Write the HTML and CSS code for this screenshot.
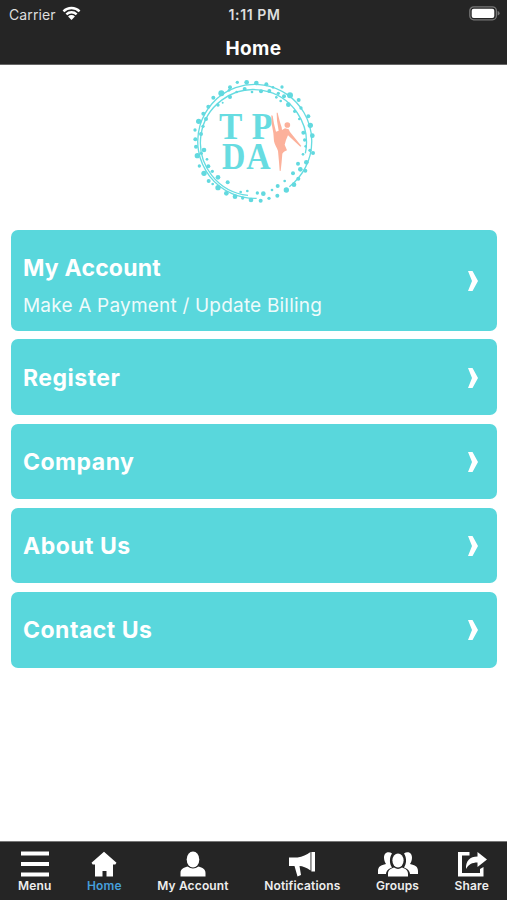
FILE: index.html
```html
<!DOCTYPE html>
<html lang="en">
<head>
    <meta charset="UTF-8">
    <meta name="viewport" content="width=device-width, initial-scale=1.0">
    <title>Home</title>
    <link rel="stylesheet" href="styles.css">
</head>
<body>
    <header class="header">
        <div class="status-bar">
            <div class="carrier">
                <span>Carrier</span>
                <svg class="wifi" viewBox="0 0 20 15">
                    <path d="M1.5 5.2a12 12 0 0 1 17 0M4.6 8.5a7.6 7.6 0 0 1 10.8 0" fill="none" stroke="#fff" stroke-width="2.5"/>
                    <path d="M6.4 10.7a5 5 0 0 1 7.2 0L10 14.4z" fill="#fff"/>
                </svg>
            </div>
            <span class="time">1:11 PM</span>
            <svg class="battery" viewBox="0 0 31 15">
                <rect x="0.8" y="0.8" width="26.6" height="13" rx="4" fill="none" stroke="#777" stroke-width="1.3"/>
                <rect x="2.7" y="2.7" width="22.6" height="9.2" rx="2" fill="#fff"/>
                <path d="M28.6 5q2 .6 2 2.3t-2 2.3z" fill="#777"/>
            </svg>
        </div>
        <h1 class="title">Home</h1>
    </header>

    <main class="content">
        <svg class="logo" viewBox="0 0 420 420">
            <!-- two thin rings, both open at the lower right -->
            <g fill="none" stroke="#67dce1">
                <path d="M218 379A171 171 0 1 1 316 344" stroke-width="4"/>
                <path d="M192 370A159 159 0 1 1 364 244" stroke-width="4"/>
            </g>
            <g id="dots" fill="#62d9df"></g>
            <g class="logo-text">
                <text x="105" y="202" textLength="70" lengthAdjust="spacingAndGlyphs">T</text>
                <text x="203" y="202" textLength="62" lengthAdjust="spacingAndGlyphs">P</text>
                <text x="114" y="291" textLength="70" lengthAdjust="spacingAndGlyphs">D</text>
                <text x="187" y="291" textLength="73" lengthAdjust="spacingAndGlyphs">A</text>
            </g>
            <g fill="#fcb19b">
                <circle cx="310" cy="159" r="8.5"/>
                <path d="M281 122c3 14 7 30 12 44l1 8 9-5 11 3 4 8 34 42-3 2-37-34-6 14-4 14 7 17c-7 3-12 6-14 10l-2 24-3 28-3-1-2-26-3-33c-3-10-10-18-12-29l-2-25-5-28-1-25 4 1 4 24 6 24 8-3-5-30-1-24z"/>
            </g>
        </svg>

        <nav class="links">
            <a class="card card-large">
                <div>
                    <h2 class="card-title">My Account</h2>
                    <p class="card-text">Make A Payment / Update Billing</p>
                </div>
                <svg class="chevron" viewBox="0 0 10 20"><path d="M0 0h4.5L10 10 4.500 20H0l4-10z"/></svg>
            </a>
            <a class="card">
                <h2 class="card-title">Register</h2>
                <svg class="chevron" viewBox="0 0 10 20"><path d="M0 0h4.500L10 10 4.500 20H0l4-10z"/></svg>
            </a>
            <a class="card">
                <h2 class="card-title">Company</h2>
                <svg class="chevron" viewBox="0 0 10 20"><path d="M0 0h4.500L10 10 4.500 20H0l4-10z"/></svg>
            </a>
            <a class="card">
                <h2 class="card-title">About Us</h2>
                <svg class="chevron" viewBox="0 0 10 20"><path d="M0 0h4.500L10 10 4.500 20H0l4-10z"/></svg>
            </a>
            <a class="card">
                <h2 class="card-title">Contact Us</h2>
                <svg class="chevron" viewBox="0 0 10 20"><path d="M0 0h4.500L10 10 4.500 20H0l4-10z"/></svg>
            </a>
        </nav>
    </main>

    <footer class="tab-bar">
        <a class="tab">
            <svg width="30" height="26" viewBox="0 0 30 26"><path d="M1 .5h28v4H1zM1 11h28v4H1zM1 21.500h28v4H1z"/></svg>
            <span>Menu</span>
        </a>
        <a class="tab active">
            <svg width="26" height="26" viewBox="0 0 26 26"><path d="M13 .8l12.500 11-1.200 1.700H22v12h-6.500v-5.500h-4v5.500H4v-12H1.700L.5 11.800z"/></svg>
            <span>Home</span>
        </a>
        <a class="tab">
            <svg width="26" height="26" viewBox="0 0 26 26"><ellipse cx="13" cy="8.500" rx="6.300" ry="8"/><path d="M.5 25.500V22c0-4 3-5.500 7-6.500q5.500 4 11 0c4 1 7 2.500 7 6.500v3.500z"/></svg>
            <span>My Account</span>
        </a>
        <a class="tab">
            <svg width="28" height="26" viewBox="0 0 28 26"><path d="M1 6.500h8.500c5-.8 9-2.500 13-5.500v18.500c-4-3-8-4.500-11-4.500l1.500 9-3.500 1.500L6.500 15H1zM23.400 1H27v19.500h-3.600z"/></svg>
            <span>Notifications</span>
        </a>
        <a class="tab">
            <svg width="40" height="26" viewBox="0 0 40 26">
                <path d="M14 2.500C11 0 6 1 6 6.500c0 3 1 5 2 6.500-5 1-8 2.500-8 7V23h8c.5-4 3-5.500 6-6.500C11.500 13 11 7 14 2.500zM26 2.500c3-2.500 8-1.500 8 4 0 3-1 5-2 6.500 5 1 8 2.500 8 7V23h-8c-.5-4-3-5.500-6-6.500 2.500-3.500 3-9.500 0-14z"/>
                <ellipse cx="20" cy="9.500" rx="5.600" ry="7"/>
                <path d="M10 25.500V23c0-4 2.500-5.500 6-6.500q4 2.800 8 0c3.500 1 6 2.500 6 6.500v2.500z"/>
            </svg>
            <span>Groups</span>
        </a>
        <a class="tab">
            <svg width="30" height="26" viewBox="0 0 30 26"><path d="M12.500 1v3.500H5V22h18v-4l3.500-2v9.500H1V1z"/><path d="M9 18C8.500 10 13 5.500 20.500 5.500V1L30 8.500 20.500 16v-4.500C15 11.500 11.500 13.500 9 18z"/></svg>
            <span>Share</span>
        </a>
    </footer>

    <script>
        // x, y, radius of each dot around the ring
        const dots = [
            [160,31,5],[188,31,7],[217,33,7],[247,37,6],[267,46,4],[294,45,5],[138,46,6],[112,64,9],[135,55,4],[88,77,6],
            [138,75,6],[182,51,6],[116,92,3],[73,104,6],[102,99,5],[158,60,4],[58,125,6],[44,148,8],[66,141,6],[33,174,5],
            [57,163,5],[51,186,6],[34,202,6],[60,234,7],[36,224,6],[40,251,8],[52,244,5],[46,282,5],[69,262,4],[60,304,8],
            [73,283,6],[74,327,6],[85,298,5],[102,316,7],[86,336,4],[102,347,8],[131,331,6],[127,364,7],
            [153,374,7],[170,360,4],[176,378,5],[201,384,7],[190,357,4],[230,386,6],[220,363,5],[238,365,7],[255,379,5],
            [264,354,4],[281,342,6],[280,371,6],[307,354,8],[302,327,4],[330,338,7],[327,304,6],[343,320,6],[349,292,7],
            [342,275,6],[364,296,6],[367,271,7],[387,243,6],[378,235,5],[357,247,4],[385,191,7],[362,204,5],[379,160,8],
            [358,182,6],[373,133,6],[351,108,5],[346,141,4],[344,84,6],[318,70,9],[313,98,7],[300,73,6],[283,64,5],
            [277,76,4],[290,87,4],[231,58,6],[256,57,6],[204,60,4],[332,118,5],[365,223,4]
        ];
        const group = document.getElementById('dots');

        dots.forEach(([x, y, r]) => {
            const dot = document.createElementNS('http://www.w3.org/2000/svg', 'circle');
            dot.setAttribute('cx', x);
            dot.setAttribute('cy', y);
            dot.setAttribute('r', r);
            group.appendChild(dot);
        });
    </script>
</body>
</html>
```

FILE: styles.css
```css
* {
    box-sizing: border-box;
}
body {
    margin: 0;
    height: 900px;
    display: flex;
    flex-direction: column;
    background: #fff;
    color: #fff;
    font-family: Inter, sans-serif;
    overflow: hidden;
}
svg {
    display: block;
}
.header {
    height: 65px;
    background: #252525;
    border-bottom: 1px solid #666;
}
.status-bar {
    display: grid;
    grid-template-columns: 1fr auto 1fr;
    align-items: center;
    height: 28px;
    padding: 0 7px 0 9px;
    font-size: 14px;
    color: #dedede;
}
.carrier {
    display: flex;
    align-items: center;
    gap: 6px;
    letter-spacing: 0.1px;
}
.wifi {
    width: 19px;
    height: 15px;
    margin-top: -2px;
}
.time {
    font-weight: 600;
    font-size: 14px;
    letter-spacing: 0.6px;
}
.battery {
    width: 31px;
    height: 15px;
    margin-top: -2px;
    justify-self: end;
}
.title {
    margin: 7px 0 0;
    font-size: 19px;
    line-height: 28px;
    font-weight: 700;
    text-align: center;
    letter-spacing: 0.4px;
}
.content {
    flex: 1;
}
.logo {
    width: 140px;
    height: 140px;
    margin: 7px auto 0 184px;
}
.logo-text {
    font-family: "Liberation Serif", serif;
    font-weight: bold;
    font-size: 115px;
    fill: #67dce1;
}
.links {
    display: flex;
    flex-direction: column;
    gap: 8.9px;
    padding: 17.5px 10px 0 11px;
}
.card {
    display: flex;
    align-items: center;
    justify-content: space-between;
    height: 75.4px;
    padding: 1px 19px 0 12px;
    border-radius: 7px;
    background: #59d7dc;
}
.card-large {
    height: 101px;
}
.card-large .card-title {
    margin-top: 4px;
    letter-spacing: 0.2px;
}
.card-title {
    margin: 0;
    font-size: 23px;
    line-height: 30px;
    font-weight: 700;
    letter-spacing: 0.5px;
}
.card-text {
    margin: 10px 0 -6px;
    font-size: 19px;
    line-height: 26px;
    letter-spacing: 0.2px;
    opacity: 0.9;
}
.chevron {
    width: 10px;
    height: 20px;
    fill: #fff;
}
.tab-bar {
    display: flex;
    justify-content: space-between;
    height: 59px;
    padding: 9px 18px 0;
    background: #252525;
    border-top: 1px solid #777;
}
.tab {
    display: flex;
    flex-direction: column;
    align-items: center;
    font-size: 12px;
    line-height: 17px;
    font-weight: 600;
    letter-spacing: 0.15px;
    color: #eee;
}
.tab svg {
    fill: #fff;
}
.tab.active {
    color: #459fdb;
}
```
